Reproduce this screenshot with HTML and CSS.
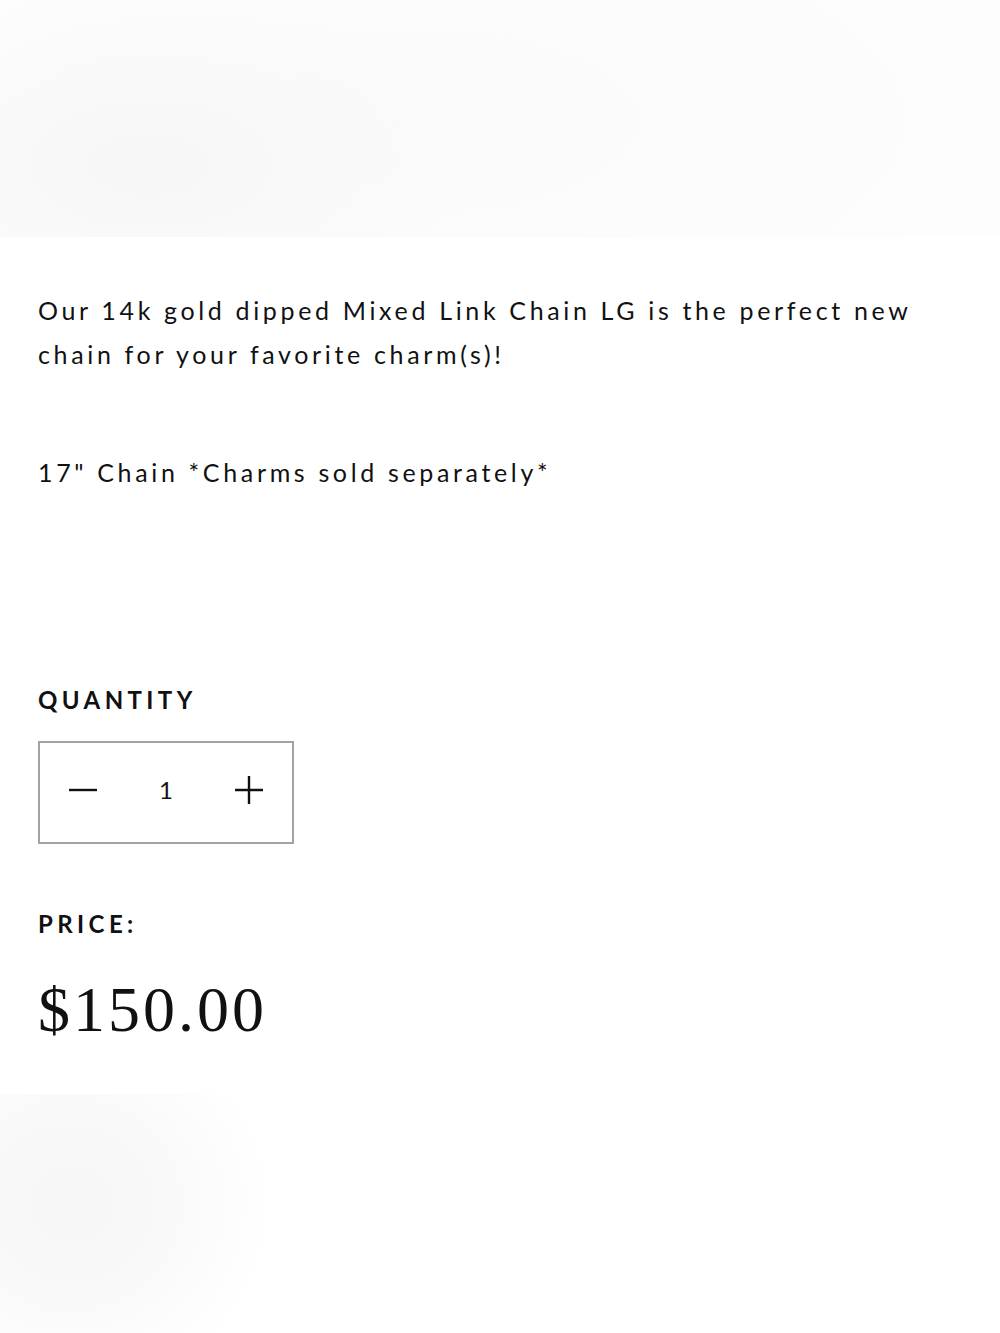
FILE: index.html
```html
<!DOCTYPE html>
<html lang="en">
<head>
  <meta charset="UTF-8">
  <meta name="viewport" content="width=device-width, initial-scale=1.0">
  <title>Mixed Link Chain LG</title>
  <link rel="stylesheet" href="styles.css">
</head>
<body>
  <div class="product-photo"></div>

  <div class="product-info">
    <p class="description">Our 14k gold dipped Mixed Link Chain LG is the perfect new chain for your favorite charm(s)!</p>
    <p class="description note">17" Chain *Charms sold separately*</p>

    <div class="label qty-label">QUANTITY</div>
    <div class="qty-box">
      <button class="qty-btn" aria-label="Decrease">
        <svg width="30" height="30" viewBox="0 0 30 30"><path d="M1 15H29" stroke="#111" stroke-width="2.4"/></svg>
      </button>
      <span class="qty-value">1</span>
      <button class="qty-btn" aria-label="Increase">
        <svg width="30" height="30" viewBox="0 0 30 30"><path d="M1 15H29M15 1V29" stroke="#111" stroke-width="2.4"/></svg>
      </button>
    </div>

    <div class="label price-label">PRICE:</div>
    <div class="price">$150.00</div>
  </div>

  <div class="related-photo"></div>
</body>
</html>
```

FILE: styles.css
```css
body {
  margin: 0;
  background: #fff;
  color: #111;
  font-family: Lato, 'Open Sans', sans-serif;
}

.product-photo {
  height: 237px;
  background:
    radial-gradient(ellipse 320px 170px at 150px 165px, #f6f6f6 0%, #f9f9f9 45%, rgba(252,252,252,0) 100%),
    radial-gradient(ellipse 620px 260px at 420px 120px, #fafafa 0%, #fcfcfc 70%, #fdfdfd 100%);
}

.product-info {
  padding: 51px 38px 0;
}

.description {
  margin: 0;
  font-size: 25px;
  line-height: 44px;
  letter-spacing: 3.65px;
  max-width: 900px;
}

.note {
  margin-top: 74px;
}

.label {
  font-size: 24px;
  line-height: 30px;
  font-weight: 700;
  letter-spacing: 4.4px;
}

.qty-label {
  margin-top: 191px;
}

/* 256 x 103 outer box with the -, value, + spread across it */
.qty-box {
  margin-top: 26px;
  box-sizing: content-box;
  width: 196px;
  height: 93px;
  padding: 0 28px 6px;
  border: 2px solid #a3a3a3;
  display: flex;
  align-items: center;
  justify-content: space-between;
}

.qty-btn {
  background: none;
  border: none;
  padding: 0;
  display: flex;
  cursor: pointer;
}

.qty-value {
  font-size: 24px;
}

.price-label {
  margin-top: 65px;
}

.price {
  margin-top: 39px;
  font-family: 'Liberation Serif', serif;
  font-size: 64px;
  line-height: 64px;
  letter-spacing: 3px;
  font-feature-settings: "onum";
}

.related-photo {
  margin-top: 52px;
  height: 240px;
  background:
    radial-gradient(ellipse 200px 190px at 70px 110px, #f6f6f6 0%, #f9f9f9 50%, rgba(255,255,255,0) 100%);
}
```
